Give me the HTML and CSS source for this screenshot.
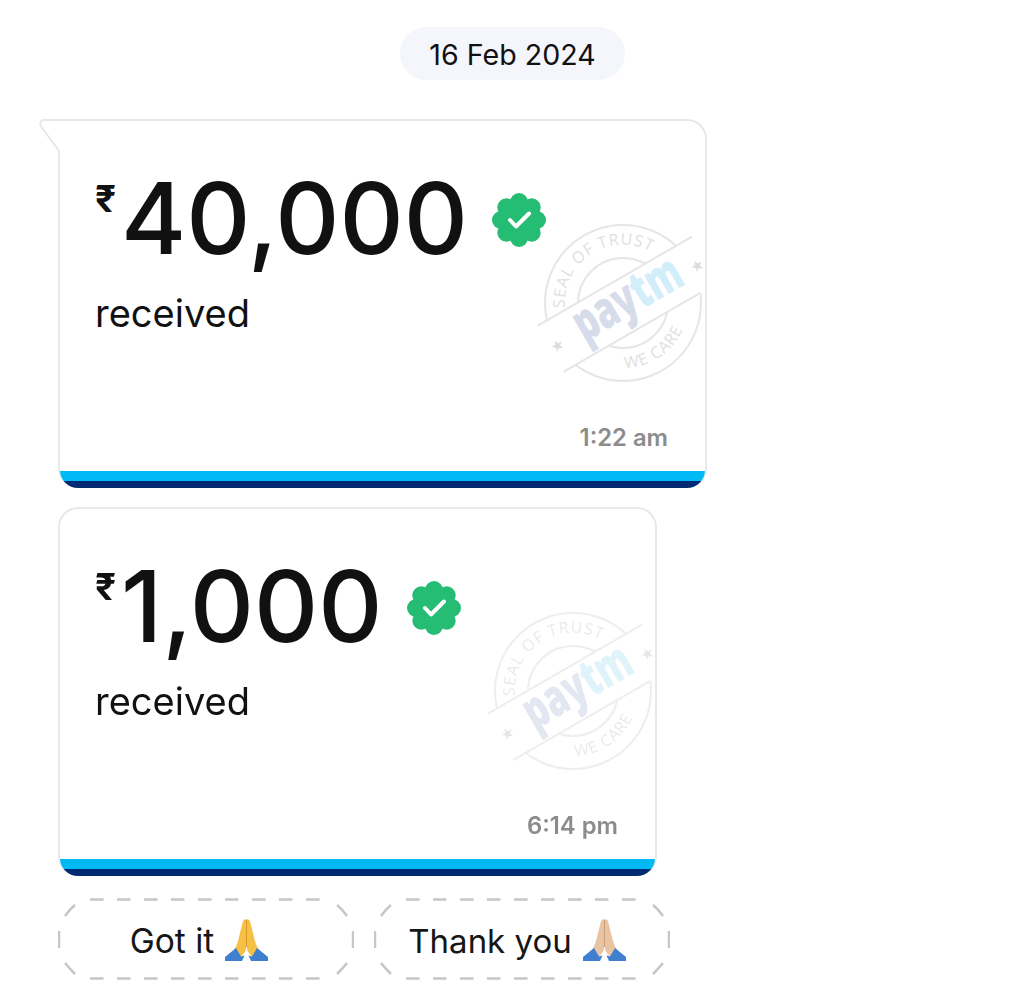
FILE: index.html
```html
<!DOCTYPE html>
<html lang="en">
<head>
<meta charset="utf-8">
<title>Payment messages</title>
<link rel="stylesheet" href="styles.css">
</head>
<body>
<svg class="defs" width="0" height="0" aria-hidden="true">
  <defs>
    <g id="badge">
      <circle r="21"/>
      <circle cx="18" cy="0" r="9"/><circle cx="12.7" cy="12.7" r="9"/><circle cx="0" cy="18" r="9"/><circle cx="-12.7" cy="12.7" r="9"/>
      <circle cx="-18" cy="0" r="9"/><circle cx="-12.7" cy="-12.7" r="9"/><circle cx="0" cy="-18" r="9"/><circle cx="12.7" cy="-12.7" r="9"/>
      <path class="badge-check" d="M-9 0L-3 6.5L10 -6.5"/>
    </g>
    <path id="arc-top" d="M-58 5A58 58 0 0 1 47 -34"/>
    <path id="arc-bottom" d="M2 65A65 65 0 0 0 60 26"/>
    <g id="stamp-art">
      <circle class="stamp-line" r="78"/>
      <circle class="stamp-line" r="45"/>
      <g transform="rotate(-30)">
        <rect class="stamp-band" x="-100" y="-23" width="200" height="53"/>
        <path class="stamp-line" d="M-85 -23H93M-86 30H72"/>
        <text class="stamp-star" x="-78" y="9">★</text>
        <text class="stamp-star" x="83" y="10">★</text>
        <g transform="translate(6 15) scale(0.68 1)">
          <text class="stamp-logo"><tspan class="stamp-pay">pay</tspan><tspan class="stamp-tm">tm</tspan></text>
        </g>
      </g>
      <text class="stamp-small"><textPath href="#arc-top">SEAL OF TRUST</textPath></text>
      <text class="stamp-small"><textPath href="#arc-bottom">WE CARE</textPath></text>
    </g>
    <g id="hands">
      <path class="hand-skin" d="M21.2 0C18.6 0 17.6 2 17 6L14 18C13 23 11.5 27 9 31L16 38L19 34C20.5 32 21.2 30 21.2 27ZM21.8 0C24.4 0 25.4 2 26 6L29 18C30 23 31.5 27 34 31L27 38L24 34C22.5 32 21.8 30 21.8 27Z"/>
      <path class="hand-line" d="M21.5 1V28"/>
      <path class="hand-sleeve" d="M11 29L0 38V42H17L19.5 36.5L16 37.5ZM32 29L43 38V42H26L23.5 36.5L27 37.5Z"/>
    </g>
  </defs>
</svg>
<main class="chat">
  <div class="date-pill">16 Feb 2024</div>

  <article class="card card-wide">
    <svg class="tail" width="21" height="34" viewBox="0 0 21 34"><path d="M21 32L2.5 8C0.5 5 1 1 5 1H21V32Z"/><path class="tail-edge" d="M20 32L2.5 8C0.5 5 1 1 5 1H42"/></svg>
    <div class="card-clip">
      <svg class="stamp" width="167" height="170" viewBox="-86 -85 167 170"><use href="#stamp-art"/></svg>
      <div class="card-body">
        <div class="amount-row">
          <span class="rupee">₹</span>
          <span class="amount">40,000</span>
          <svg class="badge" width="54" height="54" viewBox="-27 -27 54 54"><use href="#badge"/></svg>
        </div>
        <div class="label">received</div>
        <div class="time">1:22 am</div>
      </div>
      <div class="bar-light"></div>
      <div class="bar-dark"></div>
    </div>
  </article>

  <article class="card card-narrow">
    <div class="card-clip card-clip-round">
      <svg class="stamp stamp-faint" width="167" height="170" viewBox="-86 -85 167 170"><use href="#stamp-art"/></svg>
      <div class="card-body">
        <div class="amount-row">
          <span class="rupee">₹</span>
          <span class="amount">1,000</span>
          <svg class="badge badge-narrow" width="54" height="54" viewBox="-27 -27 54 54"><use href="#badge"/></svg>
        </div>
        <div class="label">received</div>
        <div class="time">6:14 pm</div>
      </div>
      <div class="bar-light"></div>
      <div class="bar-dark"></div>
    </div>
  </article>

  <div class="replies">
    <button class="reply reply-got">
      <svg class="reply-outline" width="296" height="82" viewBox="0 0 296 82"><path d="M32 1.5H265" stroke-dasharray="13.5 13.5"/><path d="M32 80.5H265" stroke-dasharray="13.5 13.5"/><path d="M7 18Q11 12 17 7M289 18Q285 12 279 7M7 65Q11 70 17 76M289 65Q285 70 279 76M1 33V50M295 33V50"/></svg>
      <span class="reply-text">Got it</span>
      <svg class="emoji emoji-yellow" width="43" height="42" viewBox="0 0 43 42"><use href="#hands"/></svg>
    </button>
    <button class="reply reply-thanks">
      <svg class="reply-outline" width="296" height="82" viewBox="0 0 296 82"><path d="M32 1.5H265" stroke-dasharray="13.5 13.5"/><path d="M32 80.5H265" stroke-dasharray="13.5 13.5"/><path d="M7 18Q11 12 17 7M289 18Q285 12 279 7M7 65Q11 70 17 76M289 65Q285 70 279 76M1 33V50M295 33V50"/></svg>
      <span class="reply-text">Thank you</span>
      <svg class="emoji emoji-tan" width="43" height="42" viewBox="0 0 43 42"><use href="#hands"/></svg>
    </button>
  </div>
</main>
</body>
</html>
```
FILE: styles.css
```css
* { box-sizing: border-box; }
html, body { margin: 0; height: 100%; background: #fff; }
body { font-family: Inter, "Liberation Sans", sans-serif; color: #111; overflow: hidden; }
.defs { position: absolute; }

.chat { display: flex; flex-direction: column; padding: 27px 0 0 58px; }

.date-pill {
  align-self: flex-start;
  margin-left: 342px;
  width: 225px;
  height: 53px;
  display: flex;
  align-items: center;
  justify-content: center;
  padding-top: 2px;
  border-radius: 27px;
  background: #f4f6fc;
  font-size: 28.6px;
}

.card {
  position: relative;
  margin-top: 39px;
  border: 2px solid #e8e8e8;
  border-bottom: 0;
  border-radius: 0 20px 20px 20px;
  background: #fff;
}
.card-wide { width: 649px; }
.card-narrow { width: 599px; margin-top: 19px; border-top-left-radius: 20px; }

.tail { position: absolute; left: -21px; top: -2px; z-index: 1; }
.tail path { fill: #fff; }
.tail .tail-edge { fill: none; stroke: #e8e8e8; stroke-width: 2; }

.card-clip {
  position: relative;
  display: flex;
  flex-direction: column;
  overflow: hidden;
  border-radius: 0 18px 18px 18px;
}
.card-clip-round { border-top-left-radius: 18px; }

.card-body { flex: none; position: relative; display: flex; flex-direction: column; height: 350px; padding: 44px 37px 0 35px; }

.amount-row { display: flex; align-items: flex-start; height: 110px; }
.rupee { width: 26px; margin-top: 12px; font-size: 37px; font-weight: 700; line-height: 44px; }
.amount { font-size: 99.5px; font-weight: 500; line-height: 116px; margin-top: -5px; }
.badge { margin: 28px 0 0 24px; fill: #25bd74; }
.badge-narrow { margin-left: 25px; }
.badge-check { fill: none; stroke: #fff; stroke-width: 4; stroke-linecap: round; stroke-linejoin: round; }

.label { margin-top: 16px; font-size: 38px; line-height: 44px; }

.time {
  margin-top: auto;
  margin-bottom: 19px;
  align-self: flex-end;
  font-size: 23.8px;
  line-height: 28px;
  font-weight: 600;
  color: #8c8c8c;
}

.bar-light { height: 10px; background: #00b9f5; }
.bar-dark { height: 7px; background: #012a72; }

.stamp { position: absolute; right: 1px; top: 97px; }
.stamp-faint { opacity: 0.68; }
.stamp-line { fill: none; stroke: #e6e6e6; stroke-width: 2; }
.stamp-band { fill: #fff; }
.stamp-small { font-family: "Open Sans", sans-serif; font-size: 16px; letter-spacing: 1px; fill: #e0e0e0; }
.stamp-star { font-size: 15px; fill: #dcdcdc; text-anchor: middle; font-family: "DejaVu Sans", sans-serif; }
.stamp-logo { font-family: "Open Sans", sans-serif; font-weight: 800; font-size: 52px; text-anchor: middle; }
.stamp-pay { fill: #d6dcea; }
.stamp-tm { fill: #d2eefa; }

.replies { display: flex; gap: 20px; margin-top: 22px; }
.reply {
  position: relative;
  width: 296px;
  height: 82px;
  display: flex;
  align-items: center;
  justify-content: center;
  gap: 11px;
  padding: 0 14px 0 0;
  border: 0;
  background: none;
  color: #161616;
  font: 400 33.5px Inter, "Liberation Sans", sans-serif;
}
.reply-thanks { padding-right: 10px; font-size: 33px; }
.reply-text { margin-top: 3px; }
.reply-outline { position: absolute; left: 0; top: 0; fill: none; stroke: #c6c6c6; stroke-width: 2.5; }
.emoji { flex: none; margin-bottom: -2px; }
.hand-skin { fill: var(--skin); }
.hand-line { fill: none; stroke: var(--skin-line); stroke-width: 1; }
.hand-sleeve { fill: #3f7fd0; }
.emoji-yellow { --skin: #f6c044; --skin-line: #d9962a; }
.emoji-tan { --skin: #e8c4a2; --skin-line: #c79d7b; }
```
